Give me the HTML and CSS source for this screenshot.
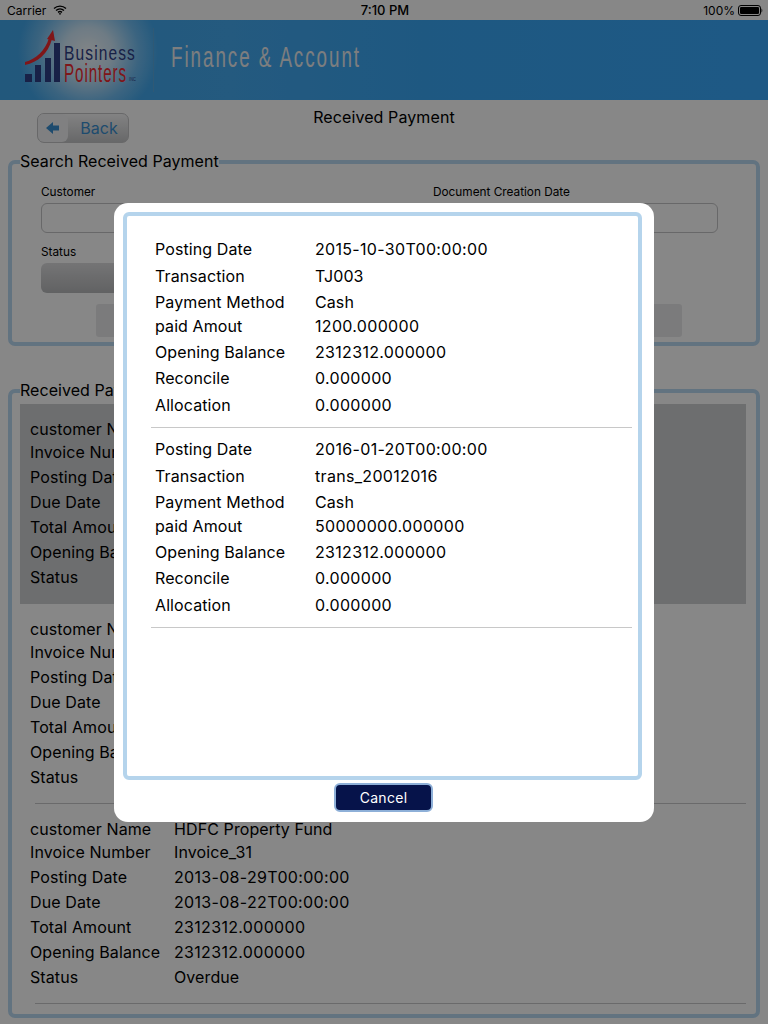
FILE: index.html
```html
<!DOCTYPE html>
<html lang="en">
<head>
<meta charset="utf-8">
<title>Received Payment</title>
<link rel="stylesheet" href="styles.css">
</head>
<body>
<div class="page">
  <div class="statusbar">
    <div class="status-left">
      <span>Carrier</span>
      <svg class="wifi" width="14" height="10" viewBox="0 0 14 10"><path d="M1 3.4C4.4.3 9.6.3 13 3.4M3 5.5c2.3-2 5.7-2 8 0M5 7.4c1.2-1 2.8-1 4 0" fill="none" stroke="#000" stroke-width="1.4"/><path d="M7 10 5.7 8.6c.7-.6 1.9-.6 2.6 0z"/></svg>
    </div>
    <div class="status-time">7:10 PM</div>
    <div class="status-right">
      <span>100%</span>
      <svg width="25" height="11" viewBox="0 0 25 11"><rect x=".5" y=".5" width="22" height="10" rx="2.5" fill="none" stroke="#000"/><rect x="2" y="2" width="19" height="7" rx="1.2"/><path d="M23.5 3.5c1 .2 1 3.800 0 4z"/></svg>
    </div>
  </div>

  <header class="appbar">
    <svg class="brand" width="400" height="80" viewBox="0 0 400 80">
      <g fill="#2f3f86">
        <rect x="25" y="54" width="7" height="8"/>
        <rect x="35" y="45" width="6" height="17"/>
        <rect x="45" y="38" width="6" height="24"/>
        <rect x="54" y="23" width="6" height="39"/>
      </g>
      <path d="M25 42C36 39 45 31 49 18L52 19C48 34 38 42 25 45z" fill="#f02a30"/>
      <path d="M53 10 47 19 55 21z" fill="#f02a30"/>
      <text class="logo-text logo-blue" x="64" y="40" textLength="72" lengthAdjust="spacingAndGlyphs">Business</text>
      <text class="logo-text logo-red" x="64" y="62" textLength="63" lengthAdjust="spacingAndGlyphs">Pointers</text>
      <text class="logo-inc" x="129" y="61" textLength="7" lengthAdjust="spacingAndGlyphs">INC</text>
      <rect x="153" y="8" width="1" height="64" fill="#5aa9dd"/>
      <text class="app-title" x="171" y="47" textLength="190" lengthAdjust="spacingAndGlyphs">Finance &amp; Account</text>
    </svg>
  </header>

  <main class="content">
    <div class="titlebar">
      <button class="back" type="button">
        <span class="back-icon"><svg width="14" height="12" viewBox="0 0 14 12"><path d="M0 6 7 0v3.500h6v5H7V12z" fill="#3a8fd0"/></svg></span>
        <span class="back-label">Back</span>
      </button>
      <h1 class="page-title">Received Payment</h1>
    </div>

    <fieldset class="panel search-panel">
      <legend>Search Received Payment</legend>
      <div class="search-grid">
        <label class="field"><span class="field-label">Customer</span><span class="input"></span></label>
        <label class="field"><span class="field-label">Document Creation Date</span><span class="input"></span></label>
        <label class="field"><span class="field-label">Status</span><span class="select"></span></label>
      </div>
      <div class="search-action"></div>
    </fieldset>

    <fieldset class="panel list-panel">
      <legend>Received Payment</legend>
      <div class="record selected">
        <span>customer Name</span><span>HDFC Property Fund</span>
        <span>Invoice Number</span><span>Invoice_31</span>
        <span>Posting Date</span><span class="num">2013-08-29T00:00:00</span>
        <span>Due Date</span><span class="num">2013-08-22T00:00:00</span>
        <span>Total Amount</span><span class="num">2312312.000000</span>
        <span>Opening Balance</span><span class="num">2312312.000000</span>
        <span>Status</span><span>Overdue</span>
      </div>
      <div class="record">
        <span>customer Name</span><span>HDFC Property Fund</span>
        <span>Invoice Number</span><span>Invoice_31</span>
        <span>Posting Date</span><span class="num">2013-08-29T00:00:00</span>
        <span>Due Date</span><span class="num">2013-08-22T00:00:00</span>
        <span>Total Amount</span><span class="num">2312312.000000</span>
        <span>Opening Balance</span><span class="num">2312312.000000</span>
        <span>Status</span><span>Overdue</span>
      </div>
      <div class="record">
        <span>customer Name</span><span>HDFC Property Fund</span>
        <span>Invoice Number</span><span>Invoice_31</span>
        <span>Posting Date</span><span class="num">2013-08-29T00:00:00</span>
        <span>Due Date</span><span class="num">2013-08-22T00:00:00</span>
        <span>Total Amount</span><span class="num">2312312.000000</span>
        <span>Opening Balance</span><span class="num">2312312.000000</span>
        <span>Status</span><span>Overdue</span>
      </div>
    </fieldset>
  </main>
</div>

<div class="overlay">
  <div class="modal">
    <div class="modal-box">
      <div class="txn">
        <span>Posting Date</span><span class="num">2015-10-30T00:00:00</span>
        <span>Transaction</span><span>TJ003</span>
        <span>Payment Method</span><span>Cash</span>
        <span>paid Amout</span><span class="num">1200.000000</span>
        <span>Opening Balance</span><span class="num">2312312.000000</span>
        <span>Reconcile</span><span class="num">0.000000</span>
        <span>Allocation</span><span class="num">0.000000</span>
      </div>
      <div class="txn">
        <span>Posting Date</span><span class="num">2016-01-20T00:00:00</span>
        <span>Transaction</span><span class="num">trans_20012016</span>
        <span>Payment Method</span><span>Cash</span>
        <span>paid Amout</span><span class="num">50000000.000000</span>
        <span>Opening Balance</span><span class="num">2312312.000000</span>
        <span>Reconcile</span><span class="num">0.000000</span>
        <span>Allocation</span><span class="num">0.000000</span>
      </div>
    </div>
    <button class="cancel" type="button">Cancel</button>
  </div>
</div>
</body>
</html>
```

FILE: styles.css
```css
* { box-sizing: border-box; }
html, body { margin: 0; height: 1024px; overflow: hidden; }
body { font-family: Inter, "Liberation Sans", sans-serif; font-size: 16px; letter-spacing: .1px; color: #000; background: #fff; }
.page { width: 768px; height: 1024px; display: flex; flex-direction: column; }
.num { letter-spacing: .32px; }

.statusbar { height: 20px; display: grid; grid-template-columns: 1fr auto 1fr; align-items: center; padding: 0 5px 0 7px; font-size: 12px; letter-spacing: 0; }
.status-left { display: flex; align-items: center; gap: 7px; }
.status-right { display: flex; align-items: center; justify-content: flex-end; gap: 3px; }
.status-time { font-size: 13px; font-weight: 500; }
.wifi { display: block; }

.appbar { height: 80px; background:
  radial-gradient(circle 70px at 88px 32px, rgba(255,255,255,.95) 0, rgba(255,255,255,.75) 35%, rgba(255,255,255,.25) 72%, rgba(255,255,255,0) 100%),
  linear-gradient(90deg, #41a6ea 0, #44aaf0 30%, #3aa7f4 55%, #39a8fc 100%); }
.brand { display: block; }
.logo-text { font-family: "Liberation Sans", sans-serif; font-size: 21px; letter-spacing: 1.5px; }
.logo-blue { fill: #2f3f86; }
.logo-red { fill: #f02a30; font-size: 25px; }
.logo-inc { font-family: "Liberation Sans", sans-serif; font-size: 5px; fill: #2f3f86; }
.app-title { font-family: "Liberation Sans", sans-serif; font-size: 29px; letter-spacing: 3px; fill: #eceef0; }

.content { padding: 0 8px; }
.titlebar { height: 52px; display: grid; grid-template-columns: 1fr auto 1fr; align-items: start; }
.back { grid-column: 1; grid-row: 1; justify-self: start; margin: 13px 0 0 29px; width: 92px; height: 30px; padding: 0; display: flex; align-items: stretch; border: 1px solid #c4c4c6; border-radius: 7px; overflow: hidden; background: linear-gradient(#f6f6f7, #c4c5c7); font: inherit; }
.back-icon { width: 30px; display: flex; align-items: center; justify-content: center; background: #f2f2f3; border-radius: 0 6px 6px 0; }
.back-label { flex: 1; padding-left: 2px; line-height: 28px; color: #3a8fd0; }
.page-title { grid-column: 2; grid-row: 1; margin: 7px 0 0; font-size: 16px; font-weight: 400; line-height: 20px; }

.panel { margin: 0; padding: 0; min-width: 0; border: 4px solid #b9d9f2; border-radius: 7px; }
.panel legend { margin-left: 8px; padding: 0; font-size: 16px; line-height: 19px; letter-spacing: .05px; }

.search-panel { height: 194px; }
.search-grid { display: grid; grid-template-columns: 285px 285px; column-gap: 107px; padding: 14px 0 0 29px; row-gap: 12px; }
.field { display: block; }
.field-label { display: block; font-size: 11.8px; letter-spacing: 0; line-height: 14px; margin-bottom: 4px; }
.input { display: block; height: 30px; border: 1px solid #c4c4c6; border-radius: 6px; }
.select { display: block; height: 30px; border-radius: 6px; background: linear-gradient(#dcdcde, #b8b9bb); }
.search-action { margin: 11px 0 0 84px; width: 586px; height: 33px; border-radius: 3px; background: #e9e9eb; }

.list-panel { margin-top: 35px; height: 637px; padding-top: 4px; }
.record { height: 200px; margin: 0 10px 0 8px; padding: 15px 0 0 10px; display: grid; grid-template-columns: 144px 1fr; grid-template-rows: 23px repeat(6, 25px); align-items: start; line-height: 20px; position: relative; }
.record::after { content: ""; position: absolute; left: 15px; right: 0; bottom: 0; height: 1px; background: #c9c9cb; }
.record.selected { background: #cfd0d2; }
.record.selected::after { display: none; }

.overlay { position: fixed; inset: 0; padding-top: 1px; background: rgba(0,0,0,.47); display: flex; align-items: center; justify-content: center; }
.modal { width: 540px; height: 619px; padding: 9px 12px 0 9px; background: #fff; border-radius: 14px; display: flex; flex-direction: column; align-items: flex-start; }
.modal-box { width: 519px; height: 568px; flex: none; border: 4px solid #b5d4ec; border-radius: 6px; padding: 12px 6px 0 24px; }
.txn { height: 200px; padding: 11px 0 0 4px; display: grid; grid-template-columns: 160px 1fr; grid-template-rows: 27px 26px 24px 26px 26px 27px 20px; align-items: start; line-height: 20px; position: relative; }
.txn::after { content: ""; position: absolute; left: 0; right: 0; bottom: 0; height: 1px; background: #c8c8c8; }
.cancel { margin: 3px 0 0 211px; width: 99px; height: 29px; padding: 0; border: 2px solid #8eb0d8; border-radius: 6px; background: #06134a; color: #fff; font: inherit; font-size: 14px; letter-spacing: .3px; }
```
